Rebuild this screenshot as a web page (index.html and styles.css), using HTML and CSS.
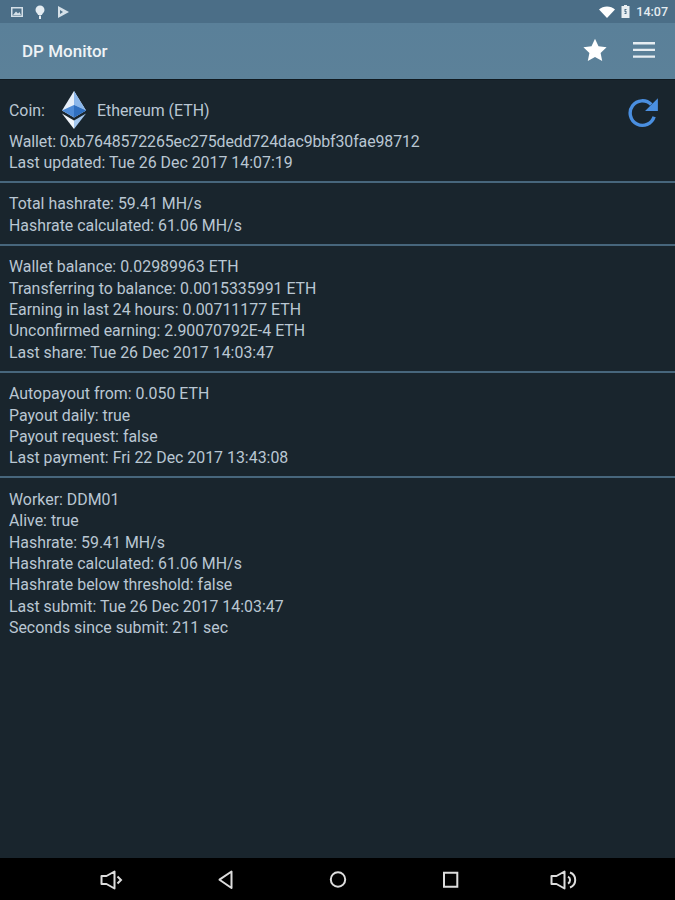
FILE: index.html
```html
<!DOCTYPE html>
<html>
  <head>
    <meta http-equiv="Content-Type" content="text/html; charset=utf-8" />
    <title>DP Monitor</title>
    <link rel="stylesheet" href="styles.css">
  </head>
  <body>
    <div class="screen">
      <div class="status-bar">
        <div class="status-left">
          <svg class="status-icon" viewBox="0 0 14 14"><path fill="#d5e0e8" d="M1 2h12v10H1z"/><path fill="#4d7089" d="M2.500 3.500h9v7h-9z"/><path fill="#d5e0e8" d="M3 10l3-3.500 2 2 1.500-1.500L11 10z"/></svg>
          <svg class="status-icon" viewBox="0 0 14 14"><path fill="#e4ecf1" d="M2.500 5a4.500 4.500 0 0 1 9 0c0 2.600-2 3-2.600 5H5.100C4.500 8 2.500 7.600 2.500 5z"/><path fill="#e4ecf1" d="M6 10.500h2V14H6z"/></svg>
          <svg class="status-icon" viewBox="0 0 14 14"><path fill="#d5e0e8" d="M2 1l11 6-11 6z"/><path fill="#4d7089" d="M4 5l3 2-3 2z"/></svg>
        </div>
        <div class="status-right">
          <svg class="wifi" viewBox="0 0 16 12"><path fill="#fff" d="M0 3.500C2 1.500 5 .5 8 .5s6 1 8 3l-8 8.500z"/></svg>
          <svg class="battery" viewBox="0 0 9 13"><path fill="#e8eef2" d="M3 0h3v1h2.500v12H.5V1H3z"/><path fill="#4d7089" d="M3.500 4h2v1h-1v1h1v3h-2V8h1V7h-1z"/></svg>
          <span class="clock">14:07</span>
        </div>
      </div>
      <header class="toolbar">
        <h1 class="toolbar-title">DP Monitor</h1>
        <div class="toolbar-actions">
          <svg class="star" viewBox="0 0 24 24"><path fill="#fff" d="M12 .8l3.500 7.500 8.100 1-6 5.600 1.600 8.100-7.200-4-7.200 4 1.600-8.100-6-5.600 8.100-1z"/></svg>
          <svg class="menu" viewBox="0 0 22 16"><path fill="#e6edf2" d="M0 0h22v2.400H0zM0 6.700h22v2.400H0zM0 13.400h22v2.400H0z"/></svg>
        </div>
      </header>
      <main class="content">
        <section class="block block-coin">
          <div class="coin-row">
            <span>Coin:</span>
            <svg class="eth" viewBox="0 0 26 38">
              <path fill="#e6eef8" d="M13 0L1 19.500l12 7 12-7z"/>
              <path fill="#4d8ad6" d="M1 19.500l12-5.500 12 5.500-12 7z"/>
              <path fill="#8ab6ea" d="M13 0v14l12 5.500z"/>
              <path fill="#2f6fc0" d="M13 14v12.500l12-7z"/>
              <path fill="#f2f6fb" d="M1 22.500L13 38V29.500z"/>
              <path fill="#a5c8ef" d="M25 22.500L13 38V29.500z"/>
            </svg>
            <span>Ethereum (ETH)</span>
          </div>
          <p class="wallet">Wallet: 0xb7648572265ec275dedd724dac9bbf30fae98712</p>
          <p>Last updated: Tue 26 Dec 2017 14:07:19</p>
          <svg class="refresh" viewBox="0 0 30 30">
            <path fill="none" stroke="#4a8fe0" stroke-width="3.200" d="M24.500 19.500A11.500 11.500 0 1 1 21.800 8"/>
            <path fill="#4a8fe0" d="M28 2v12H16z"/>
          </svg>
        </section>
        <section class="block">
          <p>Total hashrate: 59.41 MH/s</p>
          <p>Hashrate calculated: 61.06 MH/s</p>
        </section>
        <section class="block">
          <p>Wallet balance: 0.02989963 ETH</p>
          <p>Transferring to balance: 0.0015335991 ETH</p>
          <p>Earning in last 24 hours: 0.00711177 ETH</p>
          <p>Unconfirmed earning: 2.90070792E-4 ETH</p>
          <p>Last share: Tue 26 Dec 2017 14:03:47</p>
        </section>
        <section class="block">
          <p>Autopayout from: 0.050 ETH</p>
          <p>Payout daily: true</p>
          <p>Payout request: false</p>
          <p>Last payment: Fri 22 Dec 2017 13:43:08</p>
        </section>
        <section class="block block-last">
          <p>Worker: DDM01</p>
          <p>Alive: true</p>
          <p>Hashrate: 59.41 MH/s</p>
          <p>Hashrate calculated: 61.06 MH/s</p>
          <p>Hashrate below threshold: false</p>
          <p>Last submit: Tue 26 Dec 2017 14:03:47</p>
          <p>Seconds since submit: 211 sec</p>
        </section>
      </main>
      <nav class="nav-bar">
        <svg class="nav-icon" viewBox="0 0 24 24"><path fill="none" stroke="#ddd" stroke-width="2" stroke-linejoin="round" d="M-.5 8h5l8-4.500v17l-8-4.500h-5z"/><path fill="none" stroke="#ddd" stroke-width="2" d="M15.500 8.500l3.500 3.500-3.500 3.500"/></svg>
        <svg class="nav-icon" viewBox="0 0 24 24"><path fill="none" stroke="#ddd" stroke-width="2" stroke-linejoin="round" d="M17.500 3.500v16.500L5.500 11.700z"/></svg>
        <svg class="nav-icon" viewBox="0 0 24 24"><circle cx="12" cy="11.500" r="7.200" fill="none" stroke="#ddd" stroke-width="2"/></svg>
        <svg class="nav-icon" viewBox="0 0 24 24"><path fill="none" stroke="#ddd" stroke-width="2" d="M6 4.700h13.300v14H6z"/></svg>
        <svg class="nav-icon" viewBox="0 0 24 24"><path fill="none" stroke="#ddd" stroke-width="2" stroke-linejoin="round" d="M1.500 8h5l8-4.500v17l-8-4.500h-5z"/><path fill="none" stroke="#ddd" stroke-width="2" d="M18 8.500a4 4 0 0 1 0 7M20 4.500a8 8 0 0 1 0 15"/></svg>
      </nav>
    </div>
  </body>
</html>
```

FILE: styles.css
```css
html,
body {
  margin: 0;
  padding: 0;
}
body {
  font-family: Roboto, sans-serif;
  background: #19252d;
}
.screen {
  width: 675px;
  height: 900px;
  display: flex;
  flex-direction: column;
  overflow: hidden;
}
.status-bar {
  height: 23px;
  background: #4b6e87;
  display: flex;
  justify-content: space-between;
  align-items: center;
  padding: 0 7px 0 10px;
}
.status-left,
.status-right {
  display: flex;
  align-items: center;
}
.status-left {
  gap: 9px;
}
.status-icon {
  width: 14px;
  height: 14px;
}
.wifi {
  width: 16px;
  height: 12px;
}
.battery {
  width: 9px;
  height: 13px;
  margin-left: 6px;
}
.clock {
  margin-left: 6px;
  font-size: 12.500px;
  font-weight: 500;
  color: #e4ecf1;
}
.toolbar {
  height: 57px;
  box-sizing: border-box;
  background: linear-gradient(#5a8099, #5c8199);
  border-bottom: 1px solid #101a21;
  display: flex;
  justify-content: space-between;
  align-items: center;
  padding: 0 20px 0 22px;
}
.toolbar-title {
  margin: 0;
  font-size: 17px;
  font-weight: 500;
  color: #eef3f6;
}
.toolbar-actions {
  display: flex;
  align-items: center;
  gap: 26px;
  margin-bottom: 2px;
}
.star {
  width: 24px;
  height: 24px;
}
.menu {
  width: 22px;
  height: 16px;
}
.content {
  flex: 1;
  color: #b9c7d3;
  font-size: 15.900px;
}
.content p {
  margin: 0;
  line-height: 21.400px;
}
.content .wallet {
  letter-spacing: -0.100px;
}
.block {
  padding: 10.500px 9px 7.500px;
  border-bottom: 2px solid #47667c;
}
.block-coin {
  position: relative;
  padding-top: 9.500px;
}
.block-last {
  border-bottom: 0;
}
.coin-row {
  display: flex;
  align-items: center;
  height: 41px;
}
.eth {
  width: 26px;
  height: 38px;
  margin: 0 10px 0 16px;
}
.refresh {
  position: absolute;
  top: 16px;
  right: 15px;
  width: 32px;
  height: 32px;
}
.nav-bar {
  height: 42px;
  box-sizing: border-box;
  padding-top: 2px;
  background: #000;
  display: flex;
  justify-content: center;
  align-items: center;
  gap: 88px;
}
.nav-icon {
  width: 24px;
  height: 24px;
  overflow: visible;
}
```
